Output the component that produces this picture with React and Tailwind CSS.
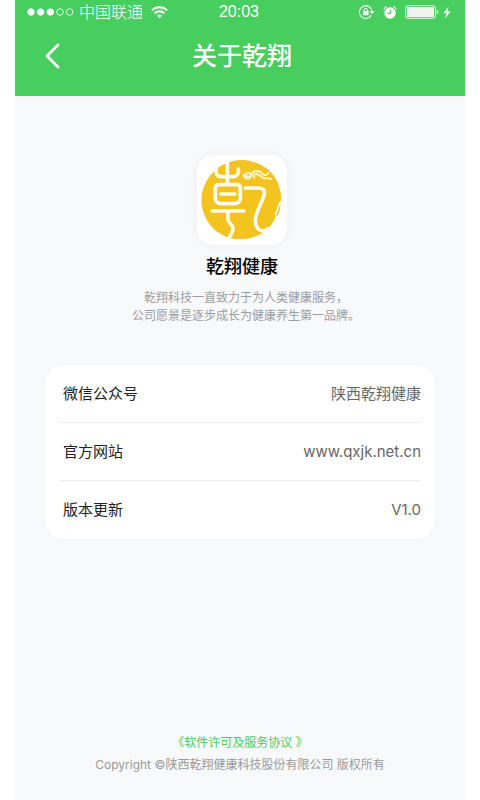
const rows = [
  { label: '微信公众号', value: '陕西乾翔健康' },
  { label: '官方网站', value: 'www.qxjk.net.cn', href: 'http://www.qxjk.net.cn' },
  { label: '版本更新', value: 'V1.0' },
];

function StatusBar() {
  return (
    <div className="grid grid-cols-[1fr_auto_1fr] items-center h-6 pl-3 pr-[14px]">
      <div className="flex items-center">
        <svg width="48" height="10" viewBox="0 0 48 10" fill="white" stroke="white" aria-hidden="true">
          <circle cx="4" cy="5" r="3.2" />
          <circle cx="13.7" cy="5" r="3.2" />
          <circle cx="23.3" cy="5" r="3.2" />
          <circle cx="33" cy="5" r="3.3" fill="none" strokeWidth="0.8" />
          <circle cx="42.6" cy="5" r="3.3" fill="none" strokeWidth="0.8" />
        </svg>
        <span className="ml-1 text-base leading-6 font-light">中国联通</span>
        <svg className="ml-2" width="17" height="13" viewBox="0 0 17 13" fill="none" stroke="white" strokeWidth="1.9" aria-hidden="true">
          <path d="M0.9 4.4 C5.1 0.2 11.9 0.2 16.1 4.4" />
          <path d="M3.6 7.3 C6.3 4.6 10.7 4.6 13.4 7.3" />
          <path d="M5.9 9.6 C7.4 8.2 9.6 8.2 11.1 9.6 L8.5 12.3 Z" fill="white" stroke="none" />
        </svg>
      </div>

      <span className="text-base leading-6 font-['Liberation_Sans',sans-serif]">20:03</span>

      <div className="flex items-center justify-end">
        {/* Rotation lock */}
        <svg width="17" height="16" viewBox="0 0 17 16" fill="none" stroke="white" aria-hidden="true">
          <path d="M13.2 11.4 A6.4 6.4 0 1 1 14 6.8" strokeWidth="1.1" />
          <path d="M11.6 7 H16.6 L14.1 10.2 Z" fill="white" stroke="none" />
          <rect x="5" y="7.1" width="5.6" height="4.1" rx="0.4" fill="white" stroke="none" />
          <path d="M6.2 7.2 V5.9 A1.6 1.6 0 0 1 9.4 5.9 V7.2" strokeWidth="1" />
        </svg>
        {/* Alarm */}
        <svg className="ml-2" width="14" height="15" viewBox="0 0 14 15" aria-hidden="true">
          <circle cx="7" cy="8" r="5.7" fill="white" />
          <path d="M0.8 4.4 A7.4 7.4 0 0 1 3.6 1.6 M10.4 1.6 A7.4 7.4 0 0 1 13.2 4.4" fill="none" stroke="white" strokeWidth="1.1" />
          <path d="M7.3 4.8 V8.5 H4.8" fill="none" stroke="#48ce5e" strokeWidth="1.1" />
        </svg>
        {/* Battery */}
        <svg className="ml-2" width="34" height="14" viewBox="0 0 34 14" aria-hidden="true">
          <rect x="0.5" y="0.7" width="30" height="12.6" rx="2.4" fill="none" stroke="white" strokeWidth="0.9" />
          <rect x="1.9" y="2.1" width="27.2" height="9.8" rx="1" fill="#f1f3f1" />
          <path d="M31.8 4.8 C34 5.4 34 8.6 31.8 9.2 Z" fill="white" />
        </svg>
        <svg className="ml-1" width="8" height="13" viewBox="0 0 8 13" fill="white" aria-hidden="true">
          <path d="M5.6 0.4 L0.4 7.3 H3.4 L2 12.6 L7.6 5.4 H4.4 Z" />
        </svg>
      </div>
    </div>
  );
}

function Logo() {
  return (
    <div className="size-[90px] rounded-2xl bg-white shadow-[0_0_10px_rgba(0,0,0,0.05)]">
      <svg className="size-full" viewBox="52 44 270 270" role="img" aria-label="乾翔健康">
        <path
          fill="#f3c31f"
          d="M186 59 C240 61 283 92 298 137 C303 154 306 170 304 183 C301 178 300 189 295 203 C289 216 292 222 287 233 C272 268 235 296 181 297 C116 295 68 246 65 181 C65 137 91 93 130 73 C148 64 166 59 186 59 Z"
        />
        <path d="M302 184 C296 192 295 206 290 214 C287 219 288 224 289 230" fill="none" stroke="#ffffff" strokeWidth="4" />
        <path d="M302 188 C303 204 299 220 291 230 C290 220 297 206 302 188 Z" fill="#f3c31f" />
        <g fill="none" stroke="#fffbea" strokeWidth="11" strokeLinecap="round" strokeLinejoin="round">
          <path d="M143 68 V132" />
          <path d="M109 84 C107 101 113 109 125 109 H160 C172 109 178 101 176 86" />
          <path d="M107 144 C107 137 111 133 119 133 H170 C178 133 182 137 182 144 V174 C182 184 175 190 165 190 H124 C114 190 107 184 107 174 Z" />
          <path d="M123 161 H166" strokeWidth="10" />
          <path d="M98 212 H192" />
          <path d="M145 214 V237 C145 250 160 251 160 264 C160 275 155 282 149 291" />
          <path d="M196 143 H236 C249 143 256 148 254 160 C251 181 230 207 227 239 C226 259 236 272 252 272 C258 272 262 269 264 265" />
        </g>
        <g fill="none" stroke="#fff7d2" strokeWidth="5.5" strokeLinecap="round">
          <path d="M206 108 C198 110 195 102 201 99 C209 95 217 103 212 111 C206 120 192 114 192 102" />
          <path d="M212 109 C214 98 221 92 232 92 C245 92 245 102 254 104 C260 105 264 102 266 99" />
          <path d="M225 112 C218 109 221 101 230 101 C240 101 243 112 254 114 C262 115 268 113 274 116" />
        </g>
      </svg>
    </div>
  );
}

export default function App() {
  return (
    <div className="min-h-screen bg-white px-[15px] font-[Inter,'Noto_Sans_CJK_SC',sans-serif]">
      <div className="min-h-screen flex flex-col bg-[#f8f9fb]">
        {/* Header */}
        <header className="bg-[#48ce5e] text-white">
          <StatusBar />
          <div className="grid grid-cols-[1fr_auto_1fr] items-center h-[72px] pb-2 px-6">
            <button type="button" aria-label="返回" className="justify-self-start p-1">
              <svg width="20" height="28" viewBox="0 0 20 28" fill="none" stroke="white" strokeWidth="2.8" strokeLinecap="round" strokeLinejoin="round">
                <path d="M15 3 L4 14 L15 25" />
              </svg>
            </button>
            <h1 className="pl-1 text-[25px] leading-8 font-medium">关于乾翔</h1>
          </div>
        </header>

        <main className="flex-1 flex flex-col px-[30px] pt-[59px]">
          {/* Company intro */}
          <section className="flex flex-col items-center pl-1 text-center">
            <Logo />
            <h2 className="mt-2 text-lg leading-7 font-medium text-black">乾翔健康</h2>
            <p className="mt-2 pl-2 text-xs leading-[18px] text-[#9b9da3]">
              乾翔科技一直致力于为人类健康服务，
              <br />
              公司愿景是逐步成长为健康养生第一品牌。
            </p>
          </section>

          {/* Info card */}
          <dl className="mt-10 rounded-[20px] bg-white px-[14px] divide-y divide-[#ebebed] shadow-[0_0_10px_rgba(0,0,0,0.02)]">
            {rows.map((row) => (
              <div key={row.label} className="flex items-center justify-between h-[58px] pl-1 text-[15px] leading-6">
                <dt className="text-[#222222]">{row.label}</dt>
                <dd className="text-[#666666]">{row.href ? <a href={row.href}>{row.value}</a> : row.value}</dd>
              </div>
            ))}
          </dl>
        </main>

        <footer className="flex flex-col items-center pb-6 text-xs leading-[22px] text-[#999999]">
          <a href="#license" className="text-[#48ce5e]">《软件许可及服务协议 》</a>
          <p>Copyright ©陕西乾翔健康科技股份有限公司 版权所有</p>
        </footer>
      </div>
    </div>
  );
}
